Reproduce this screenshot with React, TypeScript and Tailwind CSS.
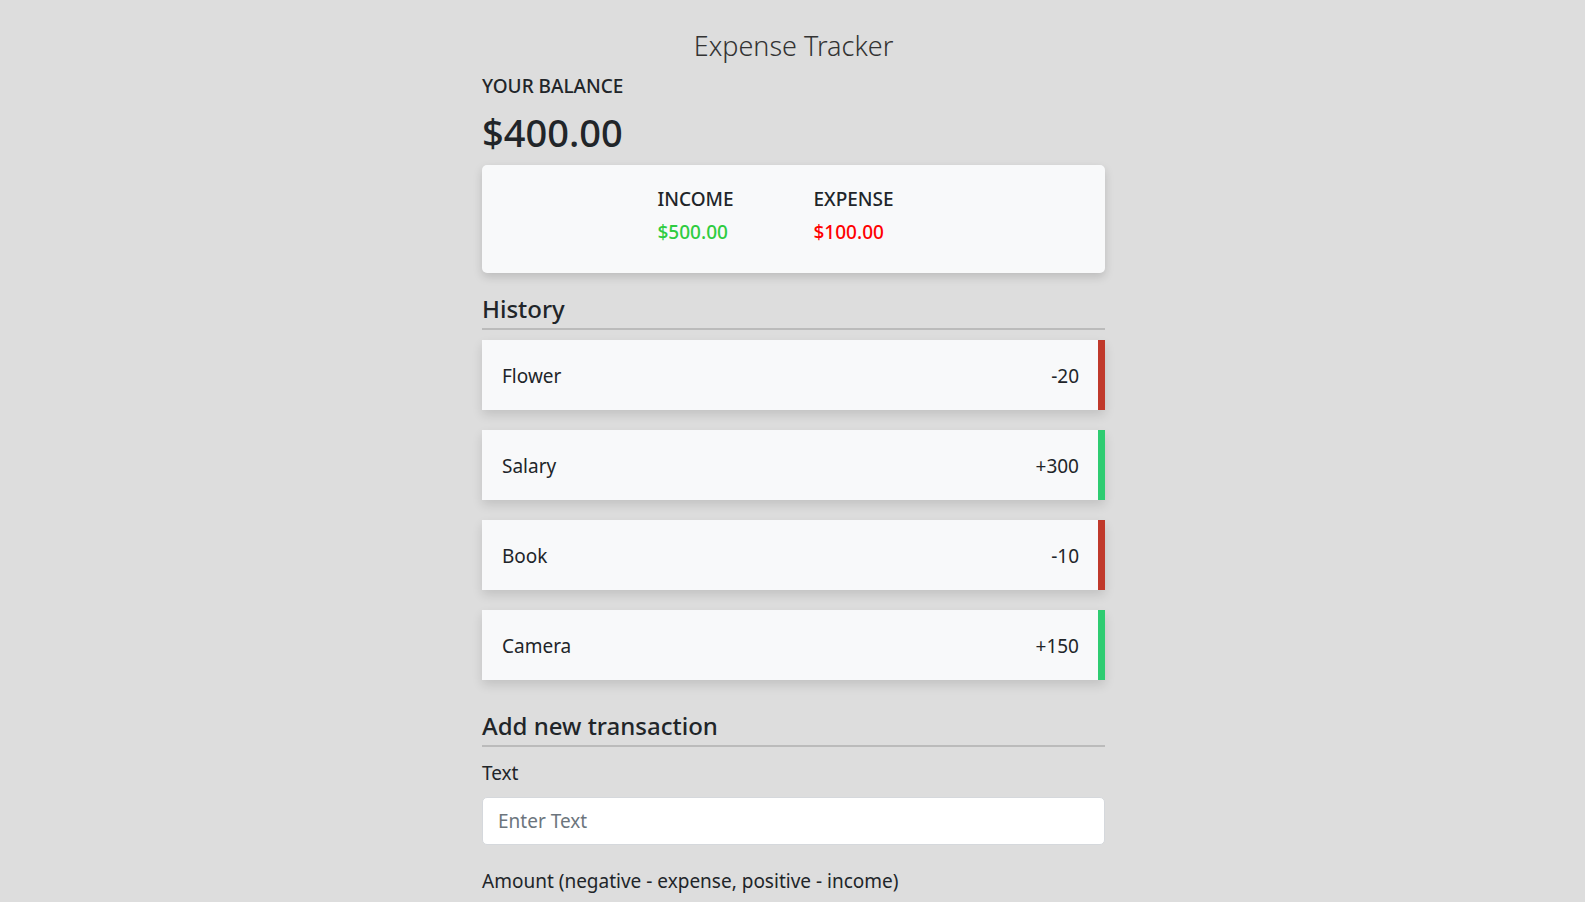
import React from "react";

const rows = [
  { text: "Flower", amount: "-20", neg: true },
  { text: "Salary", amount: "+300", neg: false },
  { text: "Book", amount: "-10", neg: true },
  { text: "Camera", amount: "+150", neg: false },
];

export default function App() {
  return (
    <div
      className="min-h-[902px] w-full bg-[#dddddd] pl-[2px] text-[#212529]"
      style={{ fontFamily: '"Noto Sans", "Open Sans", sans-serif' }}
    >
      <div className="mx-auto w-[623px] pt-[26px]">
        <h2 className="text-center text-[27px] font-light leading-[40px] text-[#333]">Expense Tracker</h2>
        <h4 className="mt-[7px] text-[19px] font-medium leading-[26px] uppercase">Your Balance</h4>
        <h1 className="mt-[9px] text-[38px] font-medium leading-[48px]">$400.00</h1>
        <div className="mt-[9px] flex h-[108px] justify-center rounded-[5px] bg-[#f8f9fa] pt-[21px] shadow-[0_4px_10px_rgba(0,0,0,0.15)]">
          <div className="w-[156px] pl-[20px]">
            <h4 className="text-[19px] font-medium leading-[26px]">INCOME</h4>
            <p className="mt-[7px] text-[19px] font-medium leading-[26px] text-[#2ecc40]">$500.00</p>
          </div>
          <div className="w-[156px] pl-[20px]">
            <h4 className="text-[19px] font-medium leading-[26px]">EXPENSE</h4>
            <p className="mt-[7px] text-[19px] font-medium leading-[26px] text-[#ff0000]">$100.00</p>
          </div>
        </div>
        <h3 className="mt-[19px] border-b-2 border-[#bbbbbb] pb-[2px] text-[24px] font-medium leading-[34px]">History</h3>
        <ul className="mt-[10px] flex flex-col gap-[20px]">
          {rows.map((r) => (
            <li
              key={r.text}
              className={`flex h-[70px] items-center justify-between bg-[#f8f9fa] pl-[20px] pr-[19px] pt-[2px] text-[19px] shadow-[0_5px_10px_rgba(0,0,0,0.12)] border-r-[7px] ${
                r.neg ? "border-[#c0392b]" : "border-[#2ecc71]"
              }`}
            >
              <span>{r.text}</span>
              <span>{r.amount}</span>
            </li>
          ))}
        </ul>
        <h3 className="mt-[29px] border-b-2 border-[#bbbbbb] pb-[2px] text-[24px] font-medium leading-[34px]">
          Add new transaction
        </h3>
        <label className="mt-[12px] block text-[19px] leading-[28px]">Text</label>
        <input
          className="mt-[10px] block h-[48px] w-full rounded-[5px] border border-[#d5d8dc] bg-white px-[15px] text-[19px] outline-none placeholder:text-[#6c757d]"
          placeholder="Enter Text"
        />
        <label className="mt-[22px] block text-[19px] leading-[28px]">Amount (negative - expense, positive - income)</label>
      </div>
    </div>
  );
}
